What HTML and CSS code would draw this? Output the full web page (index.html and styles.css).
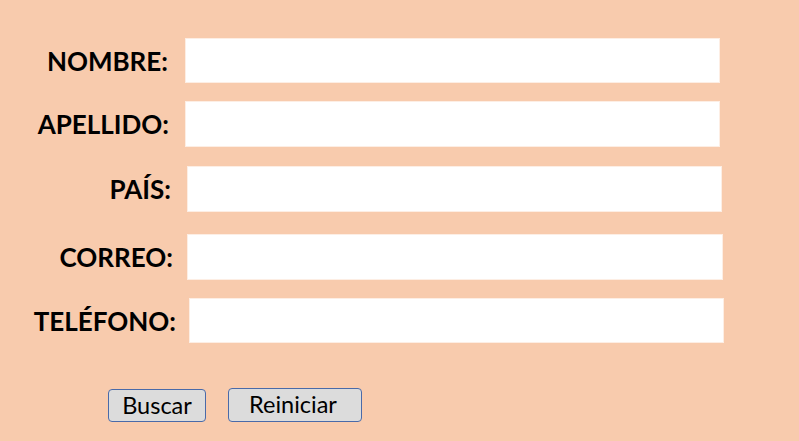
FILE: index.html
```html
<!DOCTYPE html>
<html lang="es">
<head>
<meta charset="utf-8">
<title>Formulario</title>
<link rel="stylesheet" href="styles.css">
</head>
<body>
<form class="form">
  <div class="row row-1">
    <label class="label" for="nombre">NOMBRE:</label>
    <input class="field" id="nombre" type="text">
  </div>
  <div class="row row-2">
    <label class="label" for="apellido">APELLIDO:</label>
    <input class="field" id="apellido" type="text">
  </div>
  <div class="row row-3">
    <label class="label" for="pais">PAÍS:</label>
    <input class="field" id="pais" type="text">
  </div>
  <div class="row row-4">
    <label class="label" for="correo">CORREO:</label>
    <input class="field" id="correo" type="text">
  </div>
  <div class="row row-5">
    <label class="label" for="telefono">TELÉFONO:</label>
    <input class="field" id="telefono" type="text">
  </div>
  <div class="actions">
    <button class="btn btn-buscar" type="button">Buscar</button>
    <button class="btn btn-reiniciar" type="reset">Reiniciar</button>
  </div>
</form>
</body>
</html>
```
FILE: styles.css
```css
html, body {
  margin: 0;
  padding: 0;
}
body {
  background: #f8cbad;
  width: 799px;
  height: 441px;
  overflow: hidden;
  font-family: Lato, "Open Sans", "Liberation Sans", sans-serif;
}
.form {
  display: flex;
  flex-direction: column;
  padding-top: 38px;
}
.row {
  display: flex;
  align-items: center;
}
.label {
  width: 168px;
  flex: none;
  text-align: right;
  font-weight: 700;
  font-size: 26px;
  color: #000;
  white-space: nowrap;
}
.field {
  flex: none;
  width: 535px;
  height: 45px;
  box-sizing: border-box;
  border: 1px solid #fdeee4;
  background: #fff;
  padding: 0 8px;
  margin: 0;
  outline: none;
}
.row-1 { column-gap: 17px; }
.row-2 { margin-left: 1px; margin-top: 18px; column-gap: 16px; }
.row-2 .field { height: 46px; }
.row-3 { margin-left: 3px; margin-top: 19px; column-gap: 16px; }
.row-3 .field { height: 46px; }
.row-4 { margin-left: 5px; margin-top: 22px; column-gap: 14px; }
.row-4 .field { height: 46px; width: 536px; }
.row-5 { margin-left: 8px; margin-top: 18px; column-gap: 13px; }

.actions {
  display: flex;
  align-items: flex-start;
  column-gap: 22px;
  margin-top: 45px;
  padding-left: 108px;
}
.btn {
  box-sizing: border-box;
  background: #dcdcdc;
  border: 1px solid #4a6aa8;
  border-radius: 4px;
  font-family: Lato, "Open Sans", "Liberation Sans", sans-serif;
  font-size: 23.5px;
  color: #000;
  padding: 0;
  margin: 0;
  line-height: 1;
}
.btn-buscar {
  width: 98px;
  height: 33px;
  margin-top: 1px;
}
.btn-reiniciar {
  width: 134px;
  height: 34px;
  padding-right: 4px;
}
```
